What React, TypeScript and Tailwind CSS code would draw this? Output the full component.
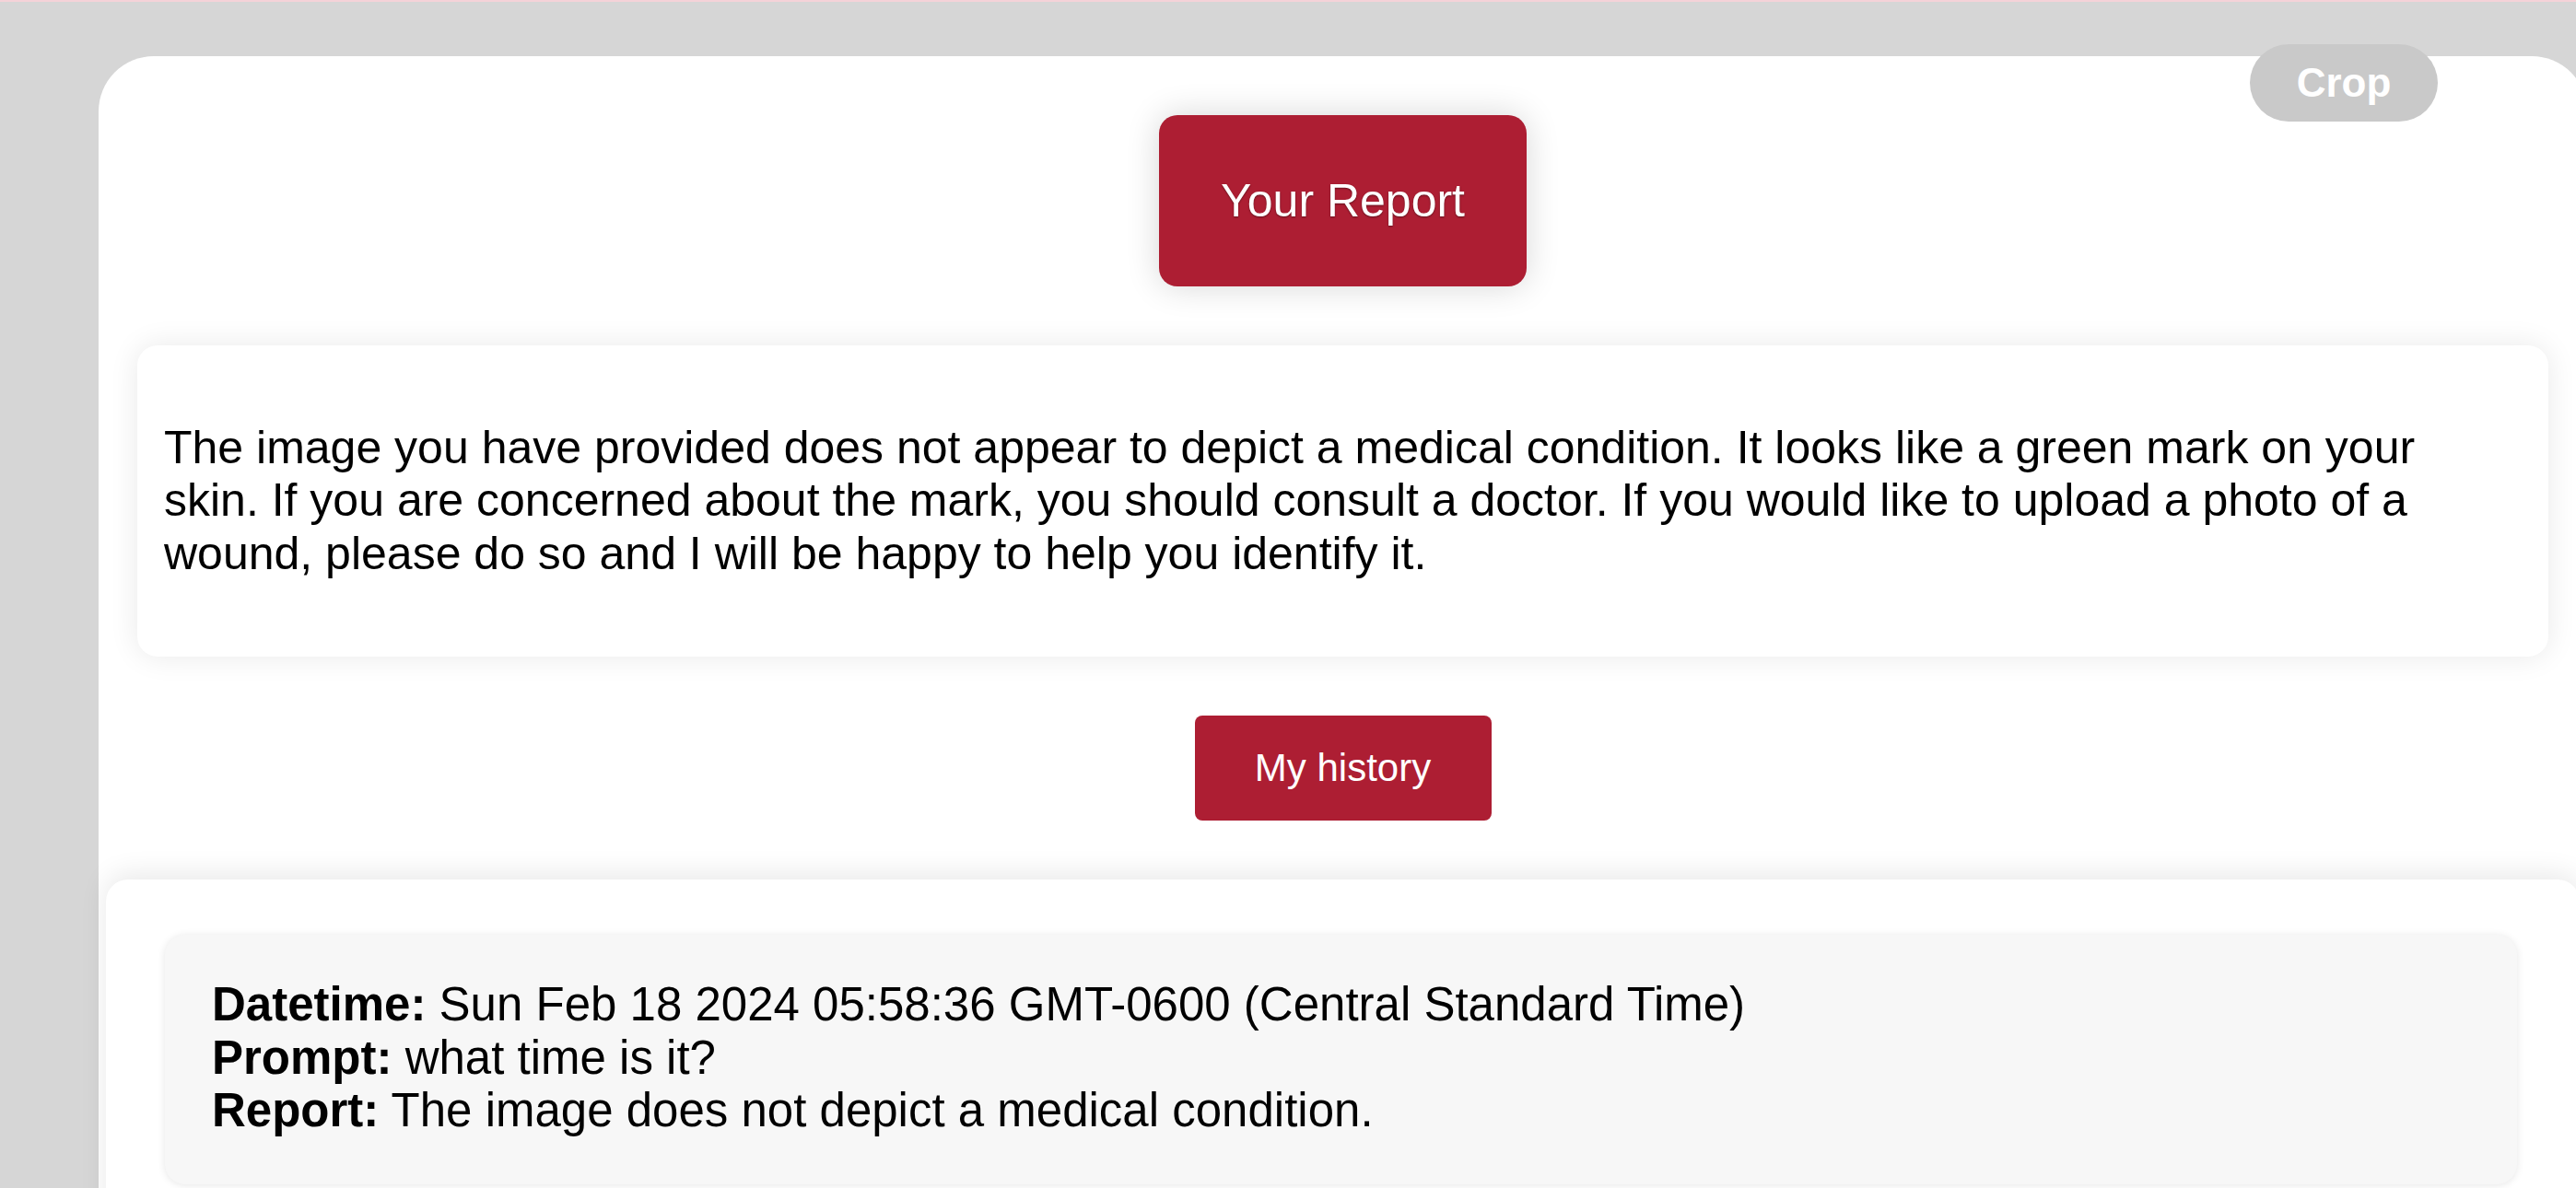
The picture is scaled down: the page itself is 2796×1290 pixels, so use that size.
import React from 'react';

const history = [
  {
    datetime: 'Sun Feb 18 2024 05:58:36 GMT-0600 (Central Standard Time)',
    prompt: 'what time is it?',
    report: 'The image does not depict a medical condition.',
  },
];

export default function App() {
  return (
    <div className="relative w-full h-screen overflow-hidden bg-[#d6d6d6] font-['Liberation_Sans',Arial,sans-serif] text-black">
      <div className="h-[2px] bg-[#f5d2d8]" />

      {/* Main panel */}
      <div className="ml-[107px] mt-[59px] w-[2701px] min-h-[1300px] bg-white rounded-[60px] pt-[64px] flex flex-col items-center">
        <button className="w-[399px] h-[186px] rounded-[20px] bg-[#ad1e33] text-white text-[50px] leading-none shadow-[0_0_36px_rgba(0,0,0,0.16)] [text-shadow:0_1px_2px_rgba(0,0,0,0.45)]">
          Your Report
        </button>

        <div className="self-stretch mx-[42px] mt-[64px] h-[338px] bg-white rounded-[22px] shadow-[0_0_32px_rgba(0,0,0,0.09)] pl-[29px] pr-[44px] flex items-center">
          <p className="text-[50px] leading-[57.5px]">
            The image you have provided does not appear to depict a medical condition. It looks like a green mark on your
            skin. If you are concerned about the mark, you should consult a doctor. If you would like to upload a photo of a
            wound, please do so and I will be happy to help you identify it.
          </p>
        </div>

        <button className="mt-[64px] w-[322px] h-[114px] rounded-[8px] bg-[#ad1e33] text-white text-[42px] leading-none">
          My history
        </button>

        {/* History list */}
        <div className="self-stretch mx-[8px] mt-[64px] bg-white rounded-[24px] shadow-[0_-6px_30px_rgba(0,0,0,0.09)] pt-[60px] pl-[64px] pr-[68px] pb-[60px]">
          {history.map((entry, i) => (
            <div
              key={i}
              className="bg-[#f7f7f7] rounded-[22px] shadow-[0_1px_8px_rgba(0,0,0,0.1)] pt-[47px] pb-[51px] px-[51px] text-[51px] leading-[57.5px]"
            >
              <div>
                <span className="font-bold">Datetime:</span> {entry.datetime}
              </div>
              <div>
                <span className="font-bold">Prompt:</span> {entry.prompt}
              </div>
              <div>
                <span className="font-bold">Report:</span> {entry.report}
              </div>
            </div>
          ))}
        </div>
      </div>

      {/* Crop pill */}
      <button className="absolute left-[2442px] top-[48px] w-[204px] h-[84px] rounded-full bg-[#c9c9c9] text-white font-bold text-[44px] leading-none">
        Crop
      </button>
    </div>
  );
}
